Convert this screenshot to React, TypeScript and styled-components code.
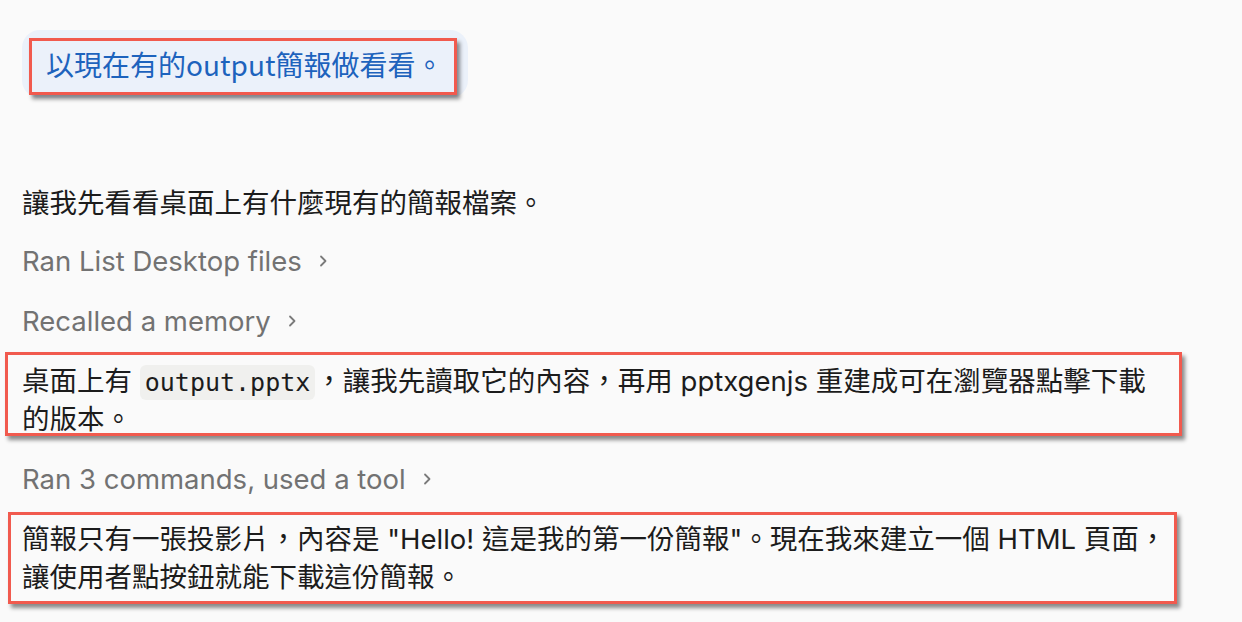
import React, { FC } from "react";
import styled, { createGlobalStyle } from "styled-components";

const GlobalStyle = createGlobalStyle`
  html, body {
    margin: 0;
    padding: 0;
    background: #fafafa;
    min-height: 100%;
  }
  body {
    font-family: "Inter", "Noto Sans CJK TC", sans-serif;
    color: #1c1c1c;
  }
`;

const Page = styled.div`
  padding: 30px 0 30px 22px;
  width: 1150px;
`;

const BubbleRow = styled.div`
  display: flex;
  margin-bottom: 86px;
`;

const Bubble = styled.div`
  position: relative;
  background: #ebf1fa;
  border-radius: 18px;
  padding: 15px 25px 15px 24px;
  font-family: "Noto Sans CJK TC", sans-serif;
  font-size: 28px;
  line-height: 38px;
  color: #1d63bd;
`;

const Thread = styled.div`
  display: flex;
  flex-direction: column;
  gap: 22px;
`;

const Paragraph = styled.p`
  position: relative;
  margin: 0;
  font-size: 27.5px;
  line-height: 38px;
  color: #1c1c1c;
`;

const Intro = styled(Paragraph)`
  margin-bottom: -2px;
`;

const Step = styled.div`
  display: flex;
  align-items: center;
  gap: 16px;
  font-size: 27.5px;
  line-height: 38px;
  color: #727272;
`;

const Code = styled.code`
  font-family: "DejaVu Sans Mono", monospace;
  font-size: 25px;
  line-height: 1;
  background: #f0f0ee;
  border-radius: 6px;
  padding: 3px 5px;
`;

// red annotation frame drawn over the marked content
const Mark = styled.span<{ $t: number; $r: number; $b: number; $l: number }>`
  position: absolute;
  top: ${({ $t }) => $t}px;
  right: ${({ $r }) => $r}px;
  bottom: ${({ $b }) => $b}px;
  left: ${({ $l }) => $l}px;
  border: 3px solid #f15a4e;
  box-shadow: 3px 4px 4px rgba(0, 0, 0, 0.45);
  pointer-events: none;
`;

const Chevron: FC = () => (
  <svg width="10" height="14" viewBox="0 0 10 14" fill="none">
    <path
      d="M3 2.5 L7.5 7 L3 11.5"
      stroke="#7a7a7a"
      strokeWidth="1.8"
      strokeLinecap="round"
      strokeLinejoin="round"
    />
  </svg>
);

const StepLine: FC<{ label: string }> = ({ label }) => (
  <Step>
    <span>{label}</span>
    <Chevron />
  </Step>
);

export default function App() {
  return (
    <>
      <GlobalStyle />
      <Page>
        <BubbleRow>
          <Bubble>
            以現在有的output簡報做看看。
            <Mark $t={8} $r={11} $b={3} $l={7} />
          </Bubble>
        </BubbleRow>
        <Thread>
          <Intro>讓我先看看桌面上有什麼現有的簡報檔案。</Intro>
          <StepLine label="Ran List Desktop files" />
          <StepLine label="Recalled a memory" />
          <Paragraph>
            桌面上有 <Code>output.pptx</Code>，讓我先讀取它的內容，再用 pptxgenjs
            重建成可在瀏覽器點擊下載的版本。
            <Mark $t={-10} $r={-10} $b={2} $l={-17} />
          </Paragraph>
          <StepLine label="Ran 3 commands, used a tool" />
          <Paragraph>
            簡報只有一張投影片，內容是 "Hello! 這是我的第一份簡報"。現在我來建立一個 HTML
            頁面，讓使用者點按鈕就能下載這份簡報。
            <Mark $t={-8} $r={-5} $b={-8} $l={-14} />
          </Paragraph>
        </Thread>
      </Page>
    </>
  );
}
